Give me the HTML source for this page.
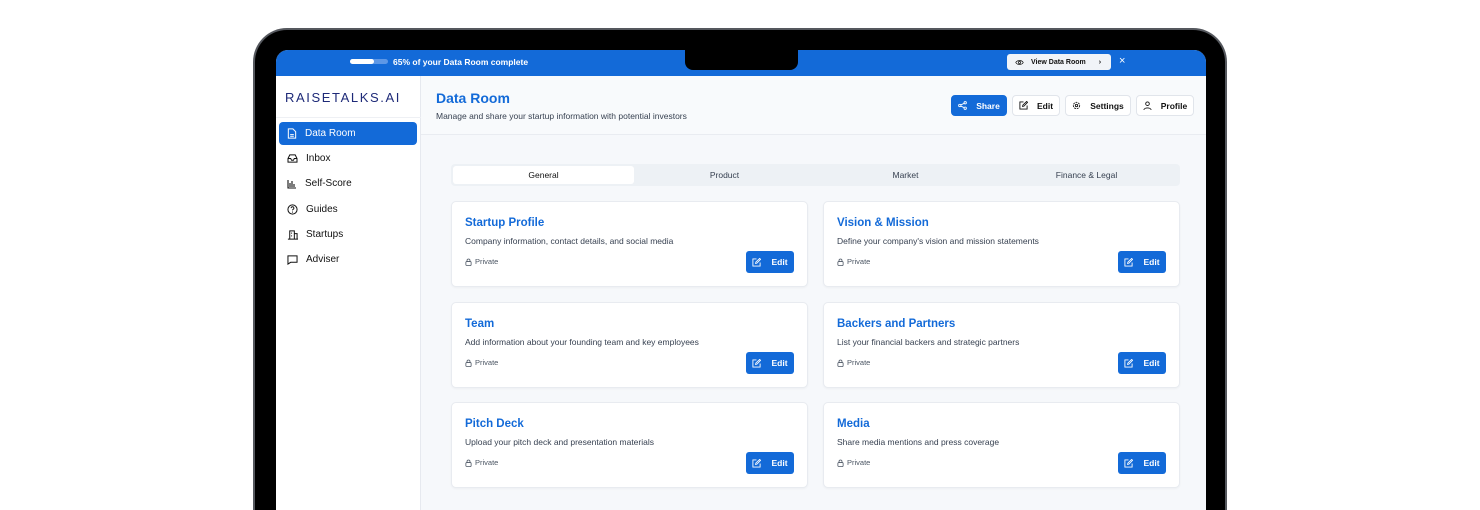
<!DOCTYPE html>
<html><head><meta charset="utf-8"><style>
*{box-sizing:border-box;margin:0;padding:0}
html{width:1480px;height:510px;overflow:hidden}
body{width:1480px;height:510px;background:#fff;position:relative;overflow:hidden;font-family:"Liberation Sans",sans-serif;color:#1f2937}
.abs{position:absolute}
.bezel{left:253px;top:28px;width:974px;height:482px;background:#000;border-radius:34px 34px 0 0;border:2px solid #55585e;border-bottom:none}
.screen{left:276px;top:50px;width:930px;height:460px;background:#f6f8fb;border-radius:12px 12px 0 0;overflow:hidden}
.topbar{left:0;top:0;width:930px;height:26px;background:#136ad8}
.notch{left:409px;top:0;width:113px;height:20px;background:#000;border-radius:0 0 8px 8px}
.side{left:0;top:26px;width:145px;height:434px;background:#fff;border-right:1px solid #e6e9ef}
.nav{position:absolute;left:3px;width:138px;height:23px;font-size:10px;display:flex;align-items:center;padding-left:8px;color:#111;border-radius:4px}
.nav svg{margin-right:8px}
.nav.act{background:#136ad8;color:#fff}
.btn{position:absolute;top:45px;height:21px;background:#fff;border:1px solid #e1e5eb;border-radius:4px;font-size:8.5px;font-weight:bold;display:flex;align-items:center;justify-content:center;gap:9px;color:#111}
.card{position:absolute;width:357px;height:86px;background:#fff;border:1px solid #e8ebf0;border-radius:5px;box-shadow:0 1px 2px rgba(0,0,0,.04)}
.card h3{position:absolute;left:13px;top:15px;font-size:11.5px;color:#136ad8;font-weight:bold}
.card p{position:absolute;left:13px;top:34px;font-size:8.5px;color:#374151}
.card .pv{position:absolute;left:13px;top:55px;font-size:7.5px;color:#4b5563;display:flex;align-items:center;gap:3px}
.card .eb{position:absolute;right:13px;top:49px;width:48px;height:22px;background:#136ad8;border-radius:3px;color:#fff;font-size:8.5px;font-weight:bold;display:flex;align-items:center;justify-content:center;gap:10px}
</style></head><body>
<div class="abs bezel"></div>
<div class="abs screen">
 <div class="abs topbar">
  <div class="abs" style="left:74px;top:9px;width:38px;height:5px;background:#5d97e6;border-radius:3px"><div style="width:24px;height:5px;background:#fff;border-radius:3px"></div></div>
  <div class="abs" style="left:117px;top:7px;font-size:8.5px;color:#fff;font-weight:bold">65% of your Data Room complete</div>
  <div class="abs" style="left:731px;top:4px;width:104px;height:16px;background:#f1f4f8;border-radius:3px;font-size:7px;font-weight:bold;color:#111;display:flex;align-items:center;padding-left:8px;gap:7px">
   <svg width="9" height="7" viewBox="0 0 12 8"><path d="M1 4C3 0.5 9 0.5 11 4C9 7.5 3 7.5 1 4Z" fill="none" stroke="#111" stroke-width="1"/><circle cx="6" cy="4" r="1.5" fill="none" stroke="#111"/></svg>View Data Room<span style="margin-left:6px">›</span></div>
  <div class="abs" style="left:843px;top:5px;color:#fff;font-size:11px">×</div>
 </div>
 <div class="abs notch"></div>
 <div class="abs side">
  <div class="abs" style="left:9px;top:14px;font-size:13px;color:#1e2a78;letter-spacing:1.6px;font-weight:normal">RAISETALKS.AI</div>
  <div class="abs" style="left:0;top:41px;width:145px;height:1px;background:#eef0f4"></div>
  <div class="nav act" style="top:46px"><svg width="10" height="11" viewBox="0 0 10 12"><path d="M1 1h5l3 3v7H1z" fill="none" stroke="#fff" stroke-width="1.1"/><path d="M3 7h4M3 9h4" stroke="#fff"/></svg>Data Room</div>
  <div class="nav" style="top:71px"><svg width="11" height="9" viewBox="0 0 12 10"><path d="M1 5l2-4h6l2 4v4H1z M1 5h3l1 2h2l1-2h3" fill="none" stroke="#111" stroke-width="1.1"/></svg>Inbox</div>
  <div class="nav" style="top:96px"><svg width="10" height="10" viewBox="0 0 10 10"><path d="M1 1v8h8M3 4v4M5 2v6M7 5v3" fill="none" stroke="#111" stroke-width="1.1"/></svg>Self-Score</div>
  <div class="nav" style="top:122px"><svg width="11" height="11" viewBox="0 0 12 12"><circle cx="6" cy="6" r="5" fill="none" stroke="#111" stroke-width="1.1"/><path d="M4.5 4.5a1.5 1.5 0 1 1 2 1.4c-.5.2-.5.6-.5 1.1" fill="none" stroke="#111"/><circle cx="6" cy="8.8" r=".6"/></svg>Guides</div>
  <div class="nav" style="top:147px"><svg width="11" height="11" viewBox="0 0 12 12"><path d="M3 11V2h5v9M8 5h3v6M1 11h11M5 4v1M5 7v1" fill="none" stroke="#111" stroke-width="1.1"/></svg>Startups</div>
  <div class="nav" style="top:172px"><svg width="11" height="10" viewBox="0 0 12 11"><path d="M1 1h10v7H4l-3 2z" fill="none" stroke="#111" stroke-width="1.1"/></svg>Adviser</div>
 </div>
 <div class="abs" style="left:145px;top:26px;width:785px;height:59px;background:#f8fafc;border-bottom:1px solid #e9ecf1"></div>
 <div class="abs" style="left:160px;top:40px;font-size:14px;font-weight:bold;color:#136ad8">Data Room</div>
 <div class="abs" style="left:160px;top:61px;font-size:8.5px;color:#374151">Manage and share your startup information with potential investors</div>
 <div class="btn" style="left:675px;width:56px;background:#136ad8;border-color:#136ad8;color:#fff"><svg width="9" height="9" viewBox="0 0 10 10"><circle cx="2" cy="5" r="1.3" fill="none" stroke="#fff"/><circle cx="8" cy="2" r="1.3" fill="none" stroke="#fff"/><circle cx="8" cy="8" r="1.3" fill="none" stroke="#fff"/><path d="M3 4.4L7 2.6M3 5.6L7 7.4" stroke="#fff"/></svg>Share</div>
 <div class="btn" style="left:736px;width:48px"><svg width="9" height="9" viewBox="0 0 10 10"><path d="M5 1H1v8h8V5M4 6l.3-1.5L8.5.5l1 1L5.5 5.7z" fill="none" stroke="#111"/></svg>Edit</div>
 <div class="btn" style="left:789px;width:66px"><svg width="9" height="9" viewBox="0 0 10 10"><circle cx="5" cy="5" r="3.5" fill="none" stroke="#111" stroke-dasharray="2 1"/><circle cx="5" cy="5" r="1.3" fill="none" stroke="#111"/></svg>Settings</div>
 <div class="btn" style="left:860px;width:58px"><svg width="9" height="9" viewBox="0 0 10 10"><circle cx="5" cy="3" r="2" fill="none" stroke="#111"/><path d="M1 10c0-3 8-3 8 0" fill="none" stroke="#111"/></svg>Profile</div>
 <div class="abs" style="left:175px;top:114px;width:729px;height:22px;background:#edf1f5;border-radius:4px;font-size:8.5px;color:#374151">
  <div class="abs" style="left:2px;top:2px;width:181px;height:18px;background:#fff;border-radius:3px;text-align:center;line-height:18px;color:#111">General</div>
  <div class="abs" style="left:183px;top:2px;width:181px;text-align:center;line-height:18px">Product</div>
  <div class="abs" style="left:364px;top:2px;width:181px;text-align:center;line-height:18px">Market</div>
  <div class="abs" style="left:545px;top:2px;width:181px;text-align:center;line-height:18px">Finance &amp; Legal</div>
 </div>
</div>
<div id="cards"></div>
<script>
var d=[["Startup Profile","Company information, contact details, and social media"],["Vision &amp; Mission","Define your company's vision and mission statements"],["Team","Add information about your founding team and key employees"],["Backers and Partners","List your financial backers and strategic partners"],["Pitch Deck","Upload your pitch deck and presentation materials"],["Media","Share media mentions and press coverage"]];
var h="";var tops=[201,302,402];
d.forEach(function(c,i){var x=i%2?823:451,y=tops[Math.floor(i/2)];
h+='<div class="card" style="left:'+x+'px;top:'+y+'px"><h3>'+c[0]+'</h3><p>'+c[1]+'</p><div class="pv"><svg width="7" height="8" viewBox="0 0 8 9"><rect x="1" y="4" width="6" height="4.5" rx="1" fill="none" stroke="#4b5563" stroke-width=".9"/><path d="M2.3 4V2.8a1.7 1.7 0 0 1 3.4 0V4" fill="none" stroke="#4b5563" stroke-width=".9"/></svg>Private</div><div class="eb"><svg width="9" height="9" viewBox="0 0 10 10"><path d="M5 1H1v8h8V5M4 6l.3-1.5L8.5.5l1 1L5.5 5.7z" fill="none" stroke="#fff"/></svg>Edit</div></div>';});
document.getElementById("cards").innerHTML=h;
</script>
</body></html>
